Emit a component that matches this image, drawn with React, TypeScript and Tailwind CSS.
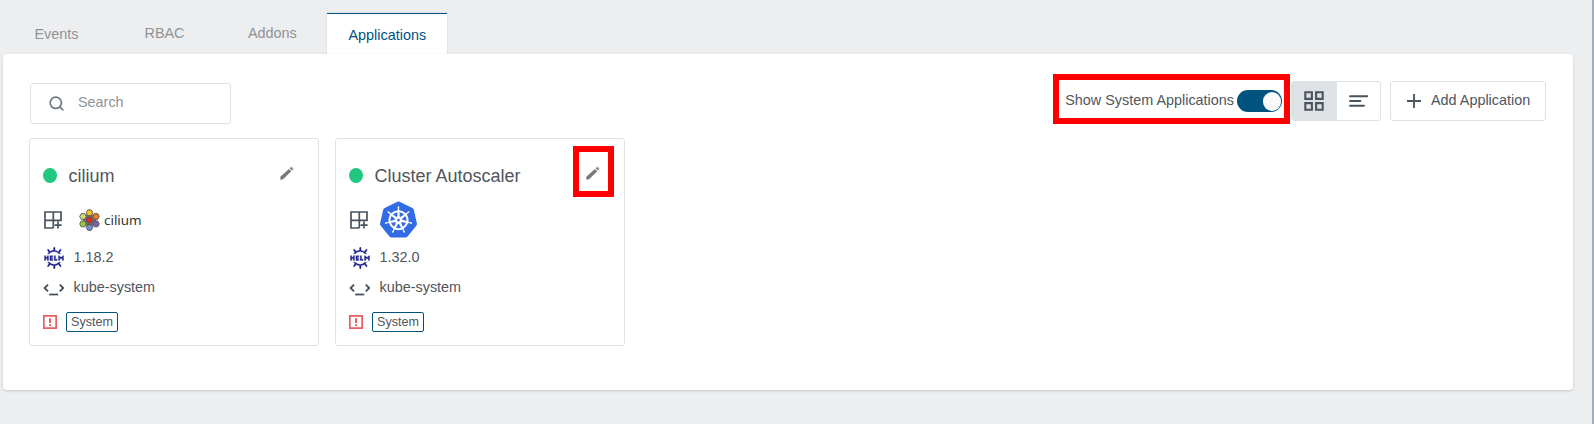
import React from "react";
import { SiHelm, SiKubernetes } from "react-icons/si";
import { FiSearch } from "react-icons/fi";

function PencilIcon() {
  return (
    <svg width="14" height="14" viewBox="0 0 14 14" fill="#757a80">
      <path d="M.3 10.8 8.9 2.9l2.4 2.4-8.2 8L.4 13.7z" />
      <path d="m9.7 2.2 1.2-1.1 2.3 2.3-1.2 1.2z" />
      <path d="m10.9.9.6-.6 2.3 2.4-.5.5z" opacity=".55" />
    </svg>
  );
}

function AppsPlusIcon() {
  return (
    <svg width="18" height="18" viewBox="0 0 18 18" fill="none" stroke="#49545e" strokeWidth="1.7">
      <path d="M9.3 17H1V1h16v8.3H1M9.3 1v16M14 10.6v7M10.6 14.1h7" />
    </svg>
  );
}

function CiliumMark() {
  const cells = [
    [10.5, 11, "#e8262b"],
    [10.5, 3.8, "#f7c51c"],
    [17, 7.5, "#f07a25"],
    [17, 14.9, "#8061a9"],
    [10.5, 18.4, "#6a93cc"],
    [4, 14.9, "#98ca3f"],
    [4, 7.5, "#cbde72"],
  ] as const;
  return (
    <svg width="21" height="22" viewBox="0 0 21 22">
      <path d="M10.5 3.8 17 7.5v7.4l-6.5 3.5L4 14.9V7.5z" fill="#777" />
      {cells.map(([x, y, fill]) => (
        <path
          key={`${x}-${y}`}
          d="M-1.7-2.9h3.4l1.6 2.9-1.6 2.9h-3.4L-3.3 0z"
          transform={`translate(${x} ${y})`}
          fill={fill}
          stroke="#55504e"
          strokeWidth=".9"
          strokeLinejoin="round"
        />
      ))}
    </svg>
  );
}

function CodeIcon() {
  return (
    <svg width="21" height="13" viewBox="0 0 21 13" fill="none" stroke="#47525c">
      <path d="M5 1.6 1.6 5 5 8.4M16.8 1.6 20.2 5l-3.4 3.4" strokeWidth="1.9" />
      <path d="M6.2 11.5h9" strokeWidth="1.8" />
    </svg>
  );
}

function AlertIcon() {
  return (
    <svg width="14" height="14" viewBox="0 0 14 14" fill="none" stroke="#ea5d60">
      <path d="M.85.85h12.3v12.3H.85z" strokeWidth="1.7" />
      <path d="M7 3.2v4.8M7 9.2v1.7" strokeWidth="2" />
    </svg>
  );
}

function GridIcon() {
  return (
    <svg width="20" height="20" viewBox="0 0 20 20" fill="none" stroke="#4b555f" strokeWidth="2.1">
      <path d="M1.3 1.3h6.6v6.6H1.3zM12.1 1.3h6.6v6.6h-6.6zM1.3 12.1h6.6v6.6H1.3zM12.1 12.1h6.6v6.6h-6.6z" />
    </svg>
  );
}

function ListIcon() {
  return (
    <svg width="19" height="12" viewBox="0 0 19 12" stroke="#49545e" strokeWidth="1.9" strokeLinecap="round">
      <path d="M1 1.2h17.4M1 6h10.4M1 10.8h14" />
    </svg>
  );
}

type AppCardProps = {
  name: string;
  version: string;
  logo: React.ReactNode;
};

function AppCard({ name, version, logo }: AppCardProps) {
  return (
    <article className="h-[208px] w-[290px] rounded-[3px] border border-[#dfe1e3] bg-white pl-[13px]">
      <div className="mt-[27px] flex h-[18px] items-start">
        <span className="mt-[2px] h-[15px] w-[14px] shrink-0 rounded-[50%] bg-[#1fc77f]" />
        <h2 className="ml-[11.5px] w-[211.5px] text-[18px] leading-[20px]">{name}</h2>
        <PencilIcon />
      </div>
      <div className="mt-[17px] flex h-[38px] items-center pl-[1px]">
        <AppsPlusIcon />
        {logo}
      </div>
      <div className="mt-[6px] flex h-[26px] items-center pl-[1px]">
        <SiHelm size={22} color="#1b1f8c" stroke="#1b1f8c" strokeWidth={0.35} className="-ml-px" />
        <span className="-mt-[2px] ml-[8.5px] leading-[20px]">{version}</span>
      </div>
      <div className="mt-[5px] flex h-[24px] items-center">
        <span className="mt-[2px]">
          <CodeIcon />
        </span>
        <span className="-mt-[3px] ml-[9.5px] leading-[20px]">kube-system</span>
      </div>
      <div className="mt-[12px] flex h-[20px] items-center">
        <AlertIcon />
        <span className="ml-[9px] flex h-[20px] w-[52px] items-center justify-center rounded-[2px] border border-[#00527f] text-[12.6px] leading-[18px]">
          System
        </span>
      </div>
    </article>
  );
}

export default function App() {
  return (
    <div className="flex h-[424px] w-[1594px] flex-col overflow-hidden border-r-2 border-[#a5adbb] bg-[#edeef0] pl-[3px] font-['Liberation_Sans',Arial,sans-serif] text-[14.4px] text-[#50555c]">
      <nav className="flex h-[54px] shrink-0 leading-[20px] text-[#8f9397]">
        <span className="w-[109px] pl-[31.5px] pt-[24px]">Events</span>
        <span className="w-[104px] pl-[32.5px] pt-[23px]">RBAC</span>
        <span className="w-[111px] pl-[32px] pt-[23px]">Addons</span>
        <span className="mt-[13px] w-[120px] border-t border-[#00527f] bg-white pl-[21.5px] pt-[11px] text-[#00527f] shadow-[0_0_2px_rgba(0,0,0,0.12)]">
          Applications
        </span>
      </nav>
      <main className="relative h-[336px] w-[1570px] rounded-[4px] bg-white pt-[27px] shadow-[0_1px_3px_rgba(0,0,0,0.16)]">
        <div className="flex h-[44px] items-start pl-[27px] pr-[27px]">
          <label className="mt-[2px] flex h-[41px] w-[201px] items-center rounded-[3px] border border-[#dfe1e3] pl-[17px] text-[#8f9397]">
            <FiSearch size={17} strokeWidth={2.4} color="#747a82" className="-mt-[1px]" />
            <span className="-mt-[3px] ml-[13px] leading-[20px]">Search</span>
          </label>
          <div className="ml-auto flex h-[40px] items-center">
            <span className="-mt-[3px] leading-[20px]">Show System Applications</span>
            <button className="ml-[3px] flex h-[22px] w-[45px] items-center justify-end rounded-full bg-[#00527f] pr-[1px]">
              <span className="h-[19px] w-[18px] rounded-full bg-[#fafafa]" />
            </button>
            <div className="ml-[9px] flex h-[40px] w-[90px] overflow-hidden rounded-[3px] border border-[#dfe2e5]">
              <span className="flex w-[45px] items-center justify-center bg-[#dfe2e5] pr-[2px]">
                <GridIcon />
              </span>
              <span className="flex flex-1 items-center justify-center">
                <ListIcon />
              </span>
            </div>
            <button className="ml-[9px] flex h-[40px] w-[156px] items-center rounded-[3px] border border-[#dfe1e3] pl-[16px]">
              <svg width="14" height="14" viewBox="0 0 14 14" stroke="#49545e" strokeWidth="1.8">
                <path d="M7 0v14M0 7h14" />
              </svg>
              <span className="-mt-[2px] ml-[10px] leading-[20px]">Add Application</span>
            </button>
          </div>
        </div>
        <div className="mt-[13px] flex gap-[16px] pl-[26px]">
          <AppCard
            name="cilium"
            version="1.18.2"
            logo={
              <span className="ml-[17px] flex items-center">
                <CiliumMark />
                <span className="ml-[4px] font-['Noto_Sans',sans-serif] text-[13.4px] leading-[20px] text-[#333333]">
                  cilium
                </span>
              </span>
            }
          />
          <AppCard
            name="Cluster Autoscaler"
            version="1.32.0"
            logo={<SiKubernetes size={37} color="#326ce5" className="-mt-[2px] ml-[12px]" />}
          />
        </div>
        <div className="absolute left-[1050px] top-[20px] h-[50px] w-[237px] border-[6px] border-[#ff0000]" />
        <div className="absolute left-[570px] top-[92px] h-[51px] w-[41px] border-[6px] border-[#ff0000]" />
      </main>
    </div>
  );
}
